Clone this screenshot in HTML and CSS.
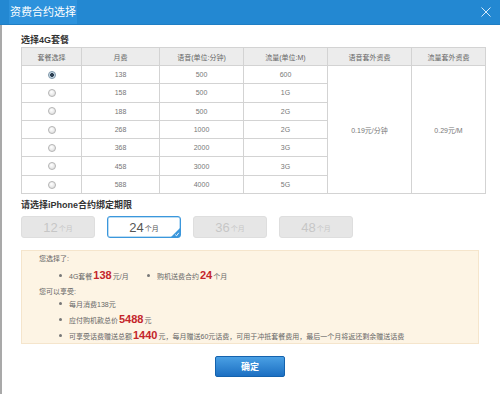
FILE: index.html
```html
<!DOCTYPE html>
<html>
    <head>
    <meta charset="utf-8">
    <link rel="stylesheet" href="styles.css">
    </head>
    <body>
        <div class="dialog">
            <div class="dlg-head">
                <span class="dlg-title">资费合约选择</span>
                <span class="dlg-close">
                    <svg width="10" height="10" viewBox="0 0 10 10"><path d="M0.5 0.5 L9.5 9.5 M9.5 0.5 L0.5 9.5" stroke="#d6eafa" stroke-width="1" fill="none"/></svg>
                </span>
            </div>
            <div class="dlg-body">
                <div class="sec-title">选择4G套餐</div>
                <table class="plan-table">
                    <thead>
                        <tr>
                            <th class="c1">套餐选择</th>
                            <th class="c2">月费</th>
                            <th class="c3">语音(单位:分钟)</th>
                            <th class="c4">流量(单位:M)</th>
                            <th class="c5">语音套外资费</th>
                            <th class="c6">流量套外资费</th>
                        </tr>
                    </thead>
                    <tbody>
                        <tr>
                            <td><span class="radio checked"></span></td>
                            <td>138</td>
                            <td>500</td>
                            <td>600</td>
                            <td rowspan="7">0.19元/分钟</td>
                            <td rowspan="7">0.29元/M</td>
                        </tr>
                        <tr><td><span class="radio"></span></td><td>158</td><td>500</td><td>1G</td></tr>
                        <tr><td><span class="radio"></span></td><td>188</td><td>500</td><td>2G</td></tr>
                        <tr><td><span class="radio"></span></td><td>268</td><td>1000</td><td>2G</td></tr>
                        <tr><td><span class="radio"></span></td><td>368</td><td>2000</td><td>3G</td></tr>
                        <tr><td><span class="radio"></span></td><td>458</td><td>3000</td><td>3G</td></tr>
                        <tr><td><span class="radio"></span></td><td>588</td><td>4000</td><td>5G</td></tr>
                    </tbody>
                </table>

                <div class="sec-title sec-term">请选择iPhone合约绑定期限</div>
                <div class="term-list">
                    <div class="term disabled"><b>12</b>个月</div>
                    <div class="term active"><b>24</b>个月
                        <span class="term-check">
                            <svg width="9" height="9" viewBox="0 0 9 9"><path d="M9 0 L9 9 L0 9 Z" fill="#3b97dc"/><path d="M4.2 6.6 L5.6 7.8 L7.8 4.8" stroke="#fff" stroke-width="0.9" fill="none"/></svg>
                        </span>
                    </div>
                    <div class="term disabled"><b>36</b>个月</div>
                    <div class="term disabled"><b>48</b>个月</div>
                </div>

                <div class="summary">
                    <div class="sum-label first">您选择了:</div>
                    <ul class="sum-list picked">
                        <li class="w88">4G套餐<em>138</em>元/月</li>
                        <li>购机送费合约<em>24</em>个月</li>
                    </ul>
                    <div class="sum-label">您可以享受:</div>
                    <ul class="sum-list">
                        <li>每月消费138元</li>
                        <li>应付购机款总价<em>5488</em>元</li>
                        <li>可享受话费赠送总额<em>1440</em>元，每月赠送60元话费，可用于冲抵套餐费用，最后一个月将返还剩余赠送话费</li>
                    </ul>
                </div>

                <div class="actions">
                    <button class="btn-ok">确定</button>
                </div>
            </div>
        </div>
    </body>
</html>
```

FILE: styles.css
```css
body{
  margin:0;
  background:#fff;
  font-family:"Liberation Sans","Noto Sans CJK SC",sans-serif;
  color:#666;
}
.dialog{
  width:500px;
  height:394px;
  overflow:hidden;
}
.dlg-head{
  height:25px;
  background:#2388d2;
  border-bottom:1px solid #1f7ec4;
  box-sizing:border-box;
  display:flex;
  align-items:stretch;
  justify-content:space-between;
}
.dlg-title{
  margin-left:9px;
  padding:0 1px;
  background:#2d92dc;
  color:#fff;
  font-size:11px;
  line-height:25px;
}
.dlg-close{
  display:flex;
  align-items:center;
  margin-right:9px;
}
.dlg-body{
  height:369px;
  box-sizing:border-box;
  border-left:2px solid #a9a9a9;
  padding:9px 21px 0 19px;
}
.sec-title{
  font-size:9px;
  font-weight:bold;
  color:#333;
  line-height:12px;
  margin-bottom:1px;
}
.sec-term{
  margin-top:5px;
  margin-bottom:5px;
}

/* plan table */
.plan-table{
  width:458px;
  border-collapse:collapse;
  table-layout:fixed;
  font-size:7px;
}
.plan-table th,
.plan-table td{
  border:1px solid #d3d3d3;
  text-align:center;
  padding:0;
  font-weight:normal;
}
.plan-table th{
  height:17px;
  background:#ececec;
  color:#666;
}
.plan-table td{
  height:17.3px;
  color:#777;
}
.c1{ width:59px; }
.c2{ width:77px; }
.c3{ width:83px; }
.c4{ width:83px; }
.c5{ width:83px; }
.c6{ width:73px; }
.radio{
  display:inline-block;
  width:6px;
  height:6px;
  border:1px solid #b5b5b5;
  border-radius:50%;
  background:radial-gradient(circle at 40% 35%,#fff,#d8d8d8);
  vertical-align:middle;
  position:relative;
}
.radio.checked{
  border-color:#7f96a8;
  background:radial-gradient(circle,#2c3e50 0,#2c3e50 1.6px,#bcd0de 2.2px,#e9f0f5 100%);
}

/* contract terms */
.term-list{
  display:flex;
  gap:12px;
  margin-bottom:12px;
}
.term{
  width:74px;
  height:22px;
  box-sizing:border-box;
  border-radius:3px;
  display:flex;
  align-items:center;
  justify-content:center;
  font-size:7px;
  padding-top:2px;
  position:relative;
}
.term b{
  font-size:13px;
  font-weight:normal;
  margin-right:1px;
  position:relative;
  top:-1px;
}
.term.disabled{
  background:#e6e6e6;
  border:1px solid #dedede;
  color:#c6c6c6;
}
.term.active{
  background:#fff;
  border:1px solid #3b97dc;
  box-shadow:inset 0 0 0 0.5px #7bbbe8;
  color:#555;
}
.term-check{
  position:absolute;
  right:0;
  bottom:0;
  line-height:0;
}

/* summary */
.summary{
  background:#fdf4e4;
  border:1px solid #f5e5cc;
  height:94px;
  box-sizing:border-box;
  padding:1px 0 0 17px;
  font-size:7px;
  color:#666;
}
.sum-label{
  line-height:12px;
}
.sum-label.first{
  line-height:14px;
}
.sum-list{
  list-style:none;
  margin:0;
  padding:0 0 0 20px;
}
.sum-list li{
  display:flex;
  align-items:baseline;
  line-height:14px;
}
.sum-list li::before{
  content:"";
  width:3px;
  height:3px;
  border-radius:50%;
  background:#777;
  margin-right:7px;
  flex:none;
  position:relative;
  top:-2px;
}
.sum-list.picked{
  display:flex;
}
.sum-list.picked li{
  line-height:18px;
}
.w88{
  width:88px;
}
.sum-list em{
  font-style:normal;
  font-weight:bold;
  font-size:11px;
  color:#c4262b;
  margin:0 1px;
}

/* actions */
.actions{
  display:flex;
  justify-content:center;
  margin-top:12px;
}
.btn-ok{
  width:70px;
  height:21px;
  border:1px solid #1462ad;
  border-radius:2px;
  background:linear-gradient(#4aa0e4,#1c6fc2);
  color:#fff;
  font-family:"Liberation Sans","Noto Sans CJK SC",sans-serif;
  font-size:9px;
  font-weight:bold;
  padding:0;
  cursor:pointer;
}
```
